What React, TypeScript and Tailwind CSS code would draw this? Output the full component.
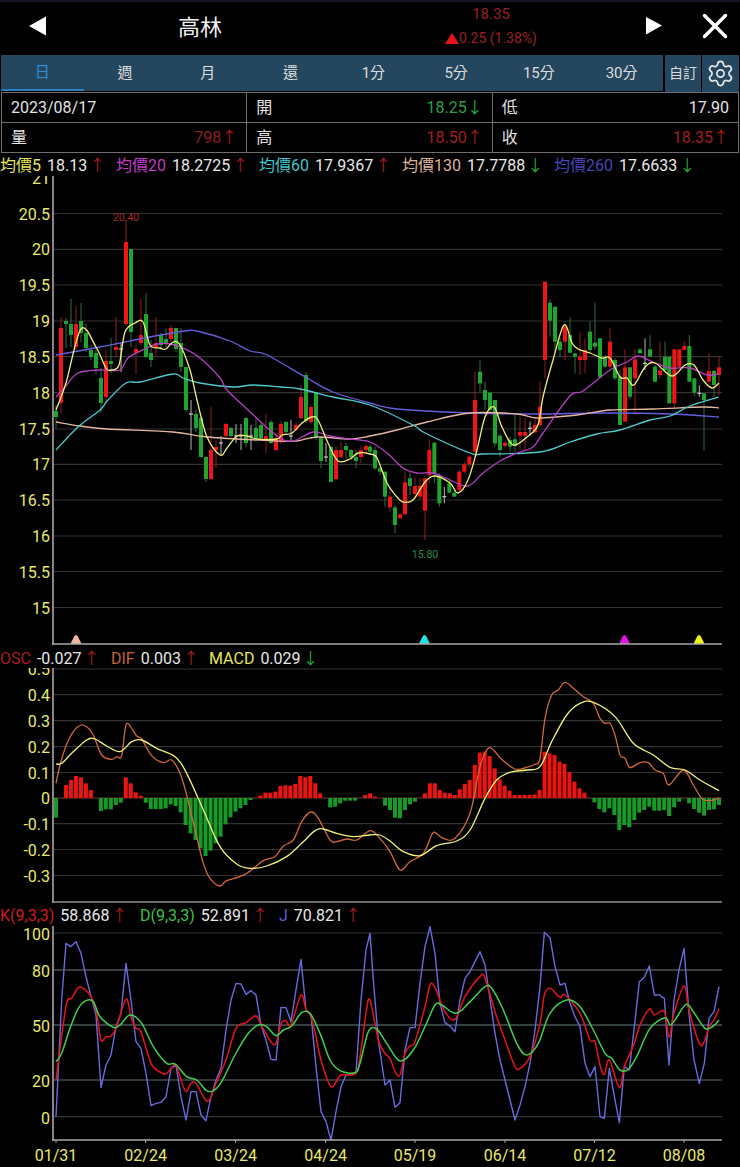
import { Settings, X } from 'lucide-react';

type Pt = [number, number];
type Candle = [number, string, number, number, number, number];

const AXIS_YELLOW = '#e8e96c';
const RED_BODY = '#f01414';
const GREEN_BODY = '#1fa52e';

// x, colour, body top, body bottom, wick top, wick bottom (page px)
const candlesA: Candle[] = [
  [56, 'g', 411, 417, 405, 428], [61, 'r', 328, 403, 317, 413], [66, 'g', 321, 324, 318, 348], [71, 'g', 324, 335, 299, 347],
  [76, 'r', 324, 347, 306, 350], [81, 'g', 321, 333, 303, 342], [86, 'g', 333, 348, 324, 352], [91, 'g', 350, 357, 345, 360],
  [96, 'g', 353, 368, 347, 374], [101, 'g', 378, 403, 368, 413], [106, 'r', 361, 397, 350, 402], [111, 'g', 361, 364, 338, 373],
  [116, 'r', 347, 350, 317, 357], [121, 'w', 349, 349, 343, 372], [126, 'r', 242, 324, 220, 326], [131, 'g', 249, 332, 249, 347],
  [136, 'r', 349, 353, 345, 374], [141, 'r', 335, 343, 299, 345], [146, 'g', 314, 357, 293, 358], [151, 'g', 353, 360, 340, 367],
  [156, 'r', 343, 347, 317, 357], [161, 'g', 335, 345, 333, 350], [166, 'g', 339, 343, 328, 347], [171, 'r', 328, 339, 325, 342],
  [176, 'g', 328, 349, 328, 352], [181, 'g', 343, 367, 328, 372], [186, 'g', 367, 410, 367, 412], [191, 'w', 414, 414, 400, 450],
  [196, 'g', 414, 428, 410, 432], [201, 'g', 418, 457, 416, 458], [206, 'g', 457, 479, 456, 482], [211, 'r', 450, 479, 407, 480],
  [216, 'r', 447, 450, 440, 468], [221, 'w', 443, 443, 436, 455], [226, 'r', 424, 436, 423, 437], [231, 'g', 428, 436, 427, 437],
  [236, 'w', 436, 436, 424, 443], [241, 'w', 436, 436, 424, 450], [246, 'g', 418, 443, 417, 447], [251, 'w', 436, 436, 425, 450],
  [256, 'g', 428, 438, 418, 442], [261, 'g', 425, 438, 422, 440], [266, 'r', 436, 439, 414, 453], [271, 'g', 422, 443, 420, 444],
  [276, 'r', 438, 450, 433, 451], [281, 'r', 424, 442, 421, 444], [286, 'g', 422, 432, 421, 434], [291, 'w', 436, 436, 420, 442],
  [296, 'r', 425, 430, 423, 431], [301, 'r', 397, 418, 385, 419], [306, 'g', 375, 421, 372, 423], [311, 'r', 407, 422, 405, 424],
  [316, 'g', 392, 438, 392, 440], [321, 'g', 438, 461, 436, 468], [326, 'w', 457, 457, 443, 462], [331, 'g', 447, 482, 446, 482],
  [336, 'r', 450, 479, 446, 480], [341, 'r', 450, 457, 442, 458], [346, 'g', 446, 450, 443, 459], [351, 'g', 450, 457, 449, 458],
  [356, 'g', 457, 461, 450, 468], [361, 'r', 450, 457, 446, 463], [366, 'r', 446, 450, 444, 454],
];

// second half read off a 3x crop: zoomed x and y
const candlesB: Candle[] = ([
  [0, 'g', 530, 545, 525, 550], [15, 'g', 540, 595, 530, 600], [30, 'g', 595, 605, 590, 615], [45, 'g', 605, 680, 605, 710],
  [60, 'r', 680, 712, 650, 725], [75, 'g', 712, 765, 705, 790], [90, 'r', 733, 745, 730, 745], [105, 'r', 637, 733, 605, 735],
  [120, 'g', 625, 648, 605, 675], [135, 'r', 648, 672, 620, 680], [150, 'r', 648, 680, 625, 690], [165, 'r', 625, 722, 625, 810],
  [178, 'r', 540, 615, 508, 640], [193, 'g', 518, 612, 518, 640], [208, 'g', 615, 700, 610, 710], [223, 'w', 680, 680, 650, 700],
  [238, 'g', 640, 668, 625, 670], [253, 'g', 668, 680, 660, 680], [268, 'r', 605, 660, 600, 665], [283, 'r', 583, 605, 575, 610],
  [298, 'r', 560, 583, 555, 590], [315, 'r', 390, 545, 305, 550], [330, 'g', 305, 340, 270, 365], [345, 'g', 360, 390, 335, 420],
  [360, 'g', 368, 420, 365, 425], [375, 'g', 390, 520, 390, 530], [390, 'g', 497, 540, 490, 560], [405, 'r', 518, 528, 515, 535],
  [420, 'g', 510, 530, 500, 545], [435, 'g', 508, 528, 435, 545], [450, 'r', 486, 497, 440, 540], [465, 'r', 486, 497, 445, 540],
  [480, 'w', 475, 475, 455, 495], [495, 'r', 465, 487, 440, 490], [510, 'r', 410, 465, 335, 470], [525, 'r', 35, 270, 35, 325],
  [540, 'g', 98, 152, 88, 200], [555, 'g', 110, 215, 110, 245], [570, 'g', 215, 240, 200, 260], [585, 'r', 170, 215, 165, 270],
  [600, 'g', 195, 248, 142, 250], [615, 'g', 250, 260, 250, 310], [630, 'r', 260, 270, 185, 315], [645, 'r', 240, 270, 205, 310],
  [660, 'g', 185, 240, 155, 250], [675, 'g', 218, 230, 98, 240], [690, 'g', 205, 322, 205, 325], [705, 'g', 260, 290, 255, 295],
  [720, 'r', 215, 290, 175, 295], [735, 'g', 270, 325, 265, 330], [750, 'g', 320, 465, 300, 465], [765, 'r', 292, 455, 238, 455],
  [780, 'g', 292, 380, 292, 388], [795, 'r', 268, 325, 238, 430], [810, 'g', 238, 250, 235, 250], [825, 'w', 280, 280, 205, 300],
  [840, 'g', 238, 260, 195, 262], [855, 'g', 290, 335, 285, 338], [870, 'r', 302, 315, 215, 325], [885, 'g', 260, 300, 215, 305],
  [898, 'g', 260, 400, 260, 400], [913, 'r', 238, 400, 238, 415], [928, 'r', 238, 290, 238, 295], [943, 'r', 228, 240, 215, 240],
  [958, 'g', 228, 335, 195, 338], [973, 'g', 325, 368, 325, 378], [988, 'w', 370, 370, 345, 380], [1002, 'g', 370, 390, 370, 540],
  [1017, 'r', 303, 335, 250, 340], [1032, 'g', 303, 345, 300, 380], [1047, 'r', 292, 315, 260, 375],
] as Candle[]).map(([x, c, t, b, wt, wb]) => [370 + x / 3, c, 270 + t / 3, 270 + b / 3, 270 + wt / 3, 270 + wb / 3]);

const ma5: Pt[] = [[56, 410], [66, 383], [81, 329], [96, 347], [106, 368], [111, 370], [119, 365], [125, 332], [135, 323], [143, 322], [150, 345], [160, 348], [166, 349], [173, 342], [180, 345], [190, 370], [197, 400], [207, 437], [220, 455], [227, 448], [237, 436], [247, 436], [257, 439], [277, 439], [282, 435], [292, 433], [302, 423], [312, 417], [318, 420], [328, 443], [338, 461], [350, 459], [358, 453], [370, 454], [377, 458], [387, 483], [397, 497], [403, 502], [413, 500], [425, 482], [435, 476], [450, 483], [458, 493], [468, 480], [477, 450], [485, 417], [494, 407], [502, 427], [513, 445], [527, 437], [538, 425], [543, 397], [553, 360], [564, 325], [572, 343], [578, 349], [590, 353], [602, 358], [610, 358], [620, 377], [627, 378], [634, 385], [645, 367], [655, 363], [672, 376], [685, 365], [694, 365], [703, 380], [712, 388], [719, 383]];
const ma20: Pt[] = [[56, 397], [65, 387], [78, 373], [100, 370], [120, 370], [128, 358], [147, 348], [157, 344], [170, 344], [183, 348], [200, 358], [220, 378], [227, 390], [248, 410], [277, 436], [293, 441], [313, 432], [330, 436], [350, 439], [370, 442], [387, 453], [403, 468], [417, 473], [433, 473], [450, 480], [468, 486], [483, 473], [500, 461], [517, 453], [533, 447], [543, 433], [570, 396], [583, 391], [610, 370], [627, 362], [638, 356], [653, 362], [670, 368], [690, 368], [707, 375], [719, 374]];
const ma60: Pt[] = [[56, 450], [78, 427], [100, 410], [108, 400], [126, 383], [140, 382], [173, 374], [183, 378], [200, 383], [233, 387], [253, 385], [280, 387], [300, 389], [333, 397], [370, 405], [413, 425], [425, 433], [470, 453], [483, 454], [540, 452], [570, 442], [597, 434], [620, 430], [650, 420], [670, 416], [690, 406], [719, 397]];
const ma130: Pt[] = [[56, 422], [80, 426], [107, 429], [173, 432], [207, 437], [277, 441], [297, 441], [317, 437], [350, 439], [370, 436], [397, 430], [427, 422], [470, 413], [517, 414], [537, 418], [577, 415], [610, 410], [653, 409], [703, 407], [719, 408]];
const ma260: Pt[] = [[56, 355], [100, 347], [150, 337], [185, 331], [197, 331], [230, 341], [250, 351], [267, 355], [307, 378], [333, 392], [370, 403], [397, 409], [470, 413], [537, 414], [603, 413], [670, 414], [719, 417]];

// MACD bars: bar end y in the 3x crops, i counts from the first bar
const barEnds = [533, 473, 435, 420, 408, 412, 430, 450, 473, 513, 508, 508, 495, 488, 412, 430, 457, 467, 488, 507, 507, 507, 505, 493, 498, 517, 555, 580, 600, 625, 648, 632, 610, 590, 553, 532, 515, 505, 495, 480, 473, 466, 458, 458, 455, 438, 436, 437, 432, 408, 412, 408, 430, 460, 473, 502, 500, 490, 482, 482, 482, 473, 465, 460, 470, 473, 497, 510, 533, 535, 510, 493, 485, 473, 460, 430, 430, 450, 458, 460, 465, 448, 432, 420, 375, 338, 335, 348, 385, 418, 437, 452, 465, 465, 465, 465, 463, 450, 335, 340, 345, 365, 372, 397, 425, 445, 458, 473, 487, 507, 517, 505, 525, 570, 555, 562, 540, 518, 510, 500, 512, 512, 510, 528, 502, 485, 473, 490, 507, 518, 527, 510, 508, 495];

const left = (pts: Pt[], oy: number): Pt[] => pts.map(([x, y]) => [x / 3, oy + y / 3]);
const right = (pts: Pt[], oy: number): Pt[] => pts.map(([x, y]) => [370 + x / 3, oy + y / 3]);

const dif: Pt[] = [
  ...left([[168, 430], [180, 375], [198, 318], [220, 275], [243, 255], [262, 262], [280, 285], [305, 345], [335, 358], [350, 350], [365, 347], [378, 255], [395, 265], [410, 288], [425, 297], [455, 347], [490, 368], [515, 360], [540, 400], [560, 465], [590, 590], [610, 670], [630, 715], [660, 738], [680, 722], [735, 703], [790, 662], [825, 650], [850, 618], [880, 600], [905, 545], [932, 516], [955, 535], [990, 600], [1010, 605], [1040, 597], [1070, 600]], 640),
  ...right([[0, 572], [25, 590], [60, 635], [90, 690], [120, 665], [160, 640], [185, 585], [195, 577], [220, 595], [255, 595], [300, 520], [330, 380], [358, 323], [395, 358], [435, 387], [470, 382], [495, 373], [510, 355], [525, 235], [545, 165], [565, 150], [585, 127], [610, 145], [640, 170], [670, 190], [690, 235], [705, 250], [720, 250], [735, 285], [750, 345], [765, 355], [780, 383], [810, 368], [835, 368], [855, 390], [880, 400], [897, 435], [940, 390], [970, 435], [998, 478], [1030, 480], [1047, 473]], 640),
];
const macd: Pt[] = [
  ...left([[168, 372], [185, 370], [215, 340], [260, 300], [285, 297], [320, 318], [360, 335], [395, 305], [425, 300], [470, 325], [525, 350], [560, 400], [610, 510], [660, 620], [710, 672], [750, 685], [800, 678], [860, 650], [905, 610], [945, 572], [970, 567], [1010, 580], [1060, 590]], 640),
  ...right([[0, 585], [30, 585], [60, 603], [100, 635], [150, 647], [200, 617], [260, 603], [300, 570], [345, 475], [380, 420], [420, 397], [470, 390], [510, 380], [545, 305], [590, 225], [630, 190], [670, 187], [735, 230], [790, 310], [850, 345], [900, 382], [945, 390], [990, 420], [1047, 452]], 640),
];

const kdjJ: Pt[] = [
  ...left([[168, 650], [185, 300], [198, 130], [212, 140], [228, 125], [243, 160], [258, 230], [273, 290], [288, 345], [303, 562], [318, 495], [333, 465], [348, 380], [363, 340], [378, 190], [393, 300], [408, 425], [423, 445], [438, 520], [453, 617], [468, 610], [483, 607], [498, 590], [513, 505], [528, 495], [543, 590], [558, 660], [573, 575], [588, 575], [603, 645], [618, 662], [633, 590], [648, 540], [663, 505], [678, 390], [693, 300], [708, 250], [723, 252], [738, 283], [753, 272], [768, 285], [783, 375], [798, 420], [813, 478], [828, 480], [843, 322], [858, 323], [873, 365], [888, 270], [903, 178], [918, 330], [933, 345], [948, 500], [963, 635], [978, 665], [993, 720], [1008, 635], [1023, 560], [1038, 525], [1053, 522], [1068, 520], [1083, 300], [1098, 150], [1110, 100]], 900),
  ...right([[10, 240], [25, 420], [45, 555], [60, 540], [75, 622], [90, 608], [105, 450], [120, 383], [135, 383], [150, 250], [165, 140], [180, 80], [195, 160], [210, 310], [225, 368], [240, 378], [255, 395], [270, 300], [285, 235], [300, 215], [330, 155], [345, 195], [375, 400], [390, 480], [405, 540], [435, 660], [450, 615], [465, 560], [480, 490], [495, 390], [510, 260], [523, 97], [540, 113], [555, 200], [570, 255], [585, 250], [600, 310], [615, 350], [630, 380], [645, 490], [660, 530], [675, 500], [690, 650], [703, 655], [718, 505], [733, 590], [748, 668], [763, 500], [778, 510], [793, 380], [808, 245], [823, 232], [838, 198], [853, 285], [868, 285], [883, 295], [897, 495], [912, 300], [927, 210], [942, 145], [957, 340], [972, 480], [988, 550], [1003, 490], [1017, 355], [1032, 335], [1047, 260]], 900),
];
const kdjK: Pt[] = [
  ...left([[168, 540], [198, 320], [215, 295], [235, 263], [250, 265], [273, 290], [290, 340], [303, 420], [318, 410], [333, 408], [350, 380], [378, 297], [393, 350], [408, 385], [423, 395], [453, 490], [483, 518], [498, 522], [513, 505], [528, 495], [543, 540], [558, 575], [573, 550], [588, 550], [618, 602], [633, 590], [648, 550], [678, 480], [708, 385], [738, 368], [768, 347], [783, 375], [813, 425], [828, 430], [843, 370], [858, 363], [873, 375], [903, 285], [918, 330], [933, 350], [948, 410], [963, 480], [993, 560], [1023, 525], [1068, 520], [1083, 450], [1098, 340], [1110, 300]], 900),
  ...right([[25, 420], [45, 460], [60, 475], [75, 515], [90, 525], [105, 460], [120, 438], [135, 425], [165, 320], [180, 255], [195, 262], [225, 335], [255, 358], [285, 290], [330, 230], [345, 235], [375, 335], [405, 420], [435, 500], [450, 505], [480, 470], [510, 370], [523, 285], [540, 265], [570, 292], [585, 285], [630, 340], [660, 420], [675, 425], [690, 495], [703, 523], [718, 480], [748, 563], [763, 500], [793, 430], [808, 380], [838, 327], [853, 345], [883, 335], [897, 412], [912, 340], [942, 258], [957, 330], [988, 430], [1003, 425], [1017, 380], [1032, 360], [1047, 327]], 900),
];
const kdjD: Pt[] = [
  ...left([[168, 485], [185, 460], [210, 385], [235, 325], [258, 302], [280, 305], [300, 350], [340, 382], [360, 375], [390, 345], [425, 370], [460, 440], [500, 490], [525, 492], [560, 530], [590, 540], [620, 572], [640, 572], [665, 545], [705, 465], [745, 400], [775, 375], [800, 380], [828, 407], [850, 390], [875, 378], [905, 338], [930, 340], [960, 400], [990, 480], [1020, 512], [1065, 518], [1080, 490], [1105, 395]], 900),
  ...right([[20, 387], [50, 430], [90, 483], [130, 450], [165, 380], [195, 315], [215, 315], [258, 340], [300, 305], [345, 260], [365, 265], [400, 330], [440, 430], [470, 465], [505, 430], [540, 340], [590, 300], [630, 320], [670, 390], [705, 460], [725, 475], [750, 510], [775, 508], [800, 470], [840, 385], [885, 353], [900, 375], [915, 360], [948, 313], [970, 335], [1005, 385], [1030, 378], [1047, 360]], 900),
];

function smooth(pts: Pt[]) {
  let d = `M${pts[0][0]} ${pts[0][1]}`;
  for (let i = 0; i < pts.length - 1; i++) {
    const p0 = pts[i - 1] || pts[i];
    const p1 = pts[i];
    const p2 = pts[i + 1];
    const p3 = pts[i + 2] || p2;
    const c1x = p1[0] + (p2[0] - p0[0]) / 6;
    const c1y = p1[1] + (p2[1] - p0[1]) / 6;
    const c2x = p2[0] - (p3[0] - p1[0]) / 6;
    const c2y = p2[1] - (p3[1] - p1[1]) / 6;
    d += `C${c1x} ${c1y} ${c2x} ${c2y} ${p2[0]} ${p2[1]}`;
  }
  return d;
}

function Curve({ pts, color, width = 1.3 }: { pts: Pt[]; color: string; width?: number }) {
  return <path d={smooth(pts)} fill="none" stroke={color} strokeWidth={width} />;
}

function AxisLabel({ y, children }: { y: number; children: string }) {
  return (
    <text x={50} y={y + 6} textAnchor="end" fontSize={16} fill={AXIS_YELLOW}>
      {children}
    </text>
  );
}

function GridLine({ y, color = '#333333' }: { y: number; color?: string }) {
  return <line x1={53} x2={722} y1={y} y2={y} stroke={color} strokeWidth={1.2} />;
}

function Marker({ x, color }: { x: number; color: string }) {
  return <path d={`M${x - 4} 643L${x - 1} 637Q${x} 635 ${x + 1} 637L${x + 4} 643Z`} fill={color} stroke={color} strokeWidth={2} strokeLinejoin="round" />;
}

const priceTicks: [number, string][] = [[178, '21'], [213.5, '20.5'], [249.3, '20'], [285, '19.5'], [321, '19'], [356.7, '18.5'], [392.7, '18'], [429, '17.5'], [464.3, '17'], [500, '16.5'], [536, '16'], [571.5, '15.5'], [607.5, '15']];
const macdTicks: [number, string][] = [[669, '0.5'], [694.7, '0.4'], [720.7, '0.3'], [746.7, '0.2'], [772.5, '0.1'], [798, '0'], [823.7, '-0.1'], [849.5, '-0.2'], [875.5, '-0.3']];
const dates: [number, string][] = [[56, '01/31'], [145.6, '02/24'], [235.6, '03/24'], [325.6, '04/24'], [415, '05/19'], [505, '06/14'], [594.5, '07/12'], [684, '08/08']];

function PriceChart() {
  return (
    <svg viewBox="0 176 740 472" className="block w-[740px] h-[472px]">
      {priceTicks.slice(1).map(([y]) => <GridLine key={y} y={y} />)}
      {[...candlesA, ...candlesB].map(([x, c, t, b, wt, wb]) => {
        const wick = c === 'r' ? '#8f1f1f' : c === 'g' ? '#2f6f3c' : '#b5b5b5';
        const body = c === 'r' ? RED_BODY : c === 'g' ? GREEN_BODY : '#c8c8c8';
        return (
          <g key={x}>
            <line x1={x} x2={x} y1={wt} y2={wb} stroke={wick} strokeWidth={1} />
            {c === 'w' ? (
              <line x1={x - 2} x2={x + 2} y1={t} y2={t} stroke={body} strokeWidth={1.2} />
            ) : (
              <rect x={x - 2} y={t} width={4} height={Math.max(b - t, 1)} fill={body} />
            )}
          </g>
        );
      })}
      <Curve pts={ma260} color="#6460dc" />
      <Curve pts={ma130} color="#e4b7a0" />
      <Curve pts={ma60} color="#52c9cf" />
      <Curve pts={ma20} color="#b53fc2" />
      <Curve pts={ma5} color="#f1f17a" />
      <text x={126} y={221} textAnchor="middle" fontSize={10.5} fill="#a82a2a">20.40</text>
      <text x={425} y={558} textAnchor="middle" fontSize={10.5} fill="#2f8f45">15.80</text>
      {priceTicks.map(([y, label]) => <AxisLabel key={label} y={y}>{label}</AxisLabel>)}
      <Marker x={76} color="#f0b49c" />
      <Marker x={424.5} color="#22e0e8" />
      <Marker x={624.5} color="#e014e0" />
      <Marker x={699} color="#f0f014" />
      <line x1={53} x2={53} y1={176} y2={645} stroke="#a8a8a8" strokeWidth={1.6} />
      <line x1={52} x2={722} y1={644} y2={644} stroke="#a8a8a8" strokeWidth={1.6} />
    </svg>
  );
}

function MacdChart() {
  return (
    <svg viewBox="0 668 740 237" className="block w-[740px] h-[237px]">
      {macdTicks.map(([y, label]) => label !== '0' && <GridLine key={y} y={y} />)}
      <line x1={53} x2={722} y1={798} y2={798} stroke="#6b3a3a" strokeWidth={1} />
      {barEnds.map((end, i) => {
        const x = 56 + 4.985 * i;
        const y = 640 + end / 3;
        if (end === 473) return null;
        return end < 473 ? (
          <rect key={i} x={x - 2} y={y} width={4} height={798 - y} fill="#ec1410" />
        ) : (
          <rect key={i} x={x - 2} y={798} width={4} height={y - 798} fill="#179a28" />
        );
      })}
      <Curve pts={dif} color="#d2693c" />
      <Curve pts={macd} color="#f1f17a" />
      {macdTicks.map(([y, label]) => <AxisLabel key={label} y={y}>{label}</AxisLabel>)}
      <line x1={53} x2={53} y1={668} y2={903} stroke="#a8a8a8" strokeWidth={1.6} />
      <line x1={52} x2={722} y1={902} y2={902} stroke="#909090" strokeWidth={1.6} />
    </svg>
  );
}

function KdjChart() {
  return (
    <svg viewBox="0 926 740 241" className="block w-[740px] h-[241px]">
      <GridLine y={933} />
      <GridLine y={970} color="#777777" />
      <GridLine y={1025} color="#6a8080" />
      <GridLine y={1080} color="#5f6f6f" />
      <GridLine y={1116.6} />
      <path d={`M${kdjJ.map((p) => p.join(' ')).join('L')}`} fill="none" stroke="#6a6ae0" strokeWidth={1.4} strokeLinejoin="round" />
      <Curve pts={kdjK} color="#e5141c" width={1.5} />
      <Curve pts={kdjD} color="#42cf4e" width={1.5} />
      <AxisLabel y={934}>100</AxisLabel>
      <AxisLabel y={971}>80</AxisLabel>
      <AxisLabel y={1026}>50</AxisLabel>
      <AxisLabel y={1081}>20</AxisLabel>
      <AxisLabel y={1118}>0</AxisLabel>
      <line x1={53} x2={53} y1={926} y2={1141} stroke="#a8a8a8" strokeWidth={1.6} />
      <line x1={52} x2={722} y1={1140} y2={1140} stroke="#a8a8a8" strokeWidth={1.6} />
      {dates.map(([x, label]) => (
        <g key={label}>
          <line x1={x} x2={x} y1={1140} y2={1143} stroke="#a8a8a8" strokeWidth={1} />
          <text x={x} y={1161} textAnchor="middle" fontSize={16} fill={AXIS_YELLOW}>{label}</text>
        </g>
      ))}
    </svg>
  );
}

function Arrow({ up }: { up: boolean }) {
  return <span className={up ? 'text-[#a11e1e]' : 'text-[#26a83a]'}>{up ? '↑' : '↓'}</span>;
}

function InfoCell({ label, value, color, up, className }: { label: string; value?: string; color?: string; up?: boolean; className: string }) {
  return (
    <div className={`flex items-center justify-between px-[9px] pt-[2px] text-[16px] text-[#e4e4e4] border-[#6e6e6e] ${className}`}>
      <span>{label}</span>
      <span className={color}>
        {value}
        {up !== undefined && <Arrow up={up} />}
      </span>
    </div>
  );
}

function LegendItem({ label, value, color, up, className }: { label: string; value: string; color: string; up: boolean; className: string }) {
  return (
    <div className={`flex items-center ${className}`}>
      <span className={color}>{label}</span>
      <span className="ml-[6px] text-[#e8e8e8]">{value}</span>
      <span className="ml-[2px]"><Arrow up={up} /></span>
    </div>
  );
}

export default function App() {
  const tabs = ['日', '週', '月', '還', '1分', '5分', '15分', '30分'];

  return (
    <div className="w-[740px] h-[1167px] overflow-hidden bg-black font-['Roboto','Noto_Sans_CJK_TC',sans-serif]">
      <div className="h-[55px] border-t-2 border-[#14142a]">
        <div className="flex items-center h-[53px]">
          <svg viewBox="0 0 20 22" className="ml-[28px] w-[20px] h-[22px] -mt-[5px]">
            <path d="M1 11L18 1.500V20.500Z" fill="#ffffff" />
          </svg>
          <div className="w-[304px] text-center text-[22px] text-[#f0f0f0] -mt-[2px]">高林</div>
          <div className="flex flex-col items-center w-[186px] ml-[46px] -mt-[5px] text-[14px] text-[#9a2222] leading-[20px]">
            <span className="text-[15px]">18.35</span>
            <span className="flex items-center mt-[4px]">
              <svg viewBox="0 0 14 11" className="w-[14px] h-[11px]">
                <path d="M7 0L14 11H0Z" fill="#e8141c" />
              </svg>
              0.25 (1.38%)
            </span>
          </div>
          <svg viewBox="0 0 18 20" className="ml-[61px] w-[18px] h-[20px] -mt-[6px]">
            <path d="M1 1L17 9.500L1 18.500Z" fill="#ffffff" />
          </svg>
          <X size={42} strokeWidth={2} className="ml-[31px] -mt-[6px] text-white" />
        </div>
      </div>

      <div className="flex h-[37px] pl-[1px]">
        <div className="flex w-[662px] bg-[#24475f] h-[36px]">
          {tabs.map((t, i) => (
            <div
              key={t}
              className={
                i === 0
                  ? 'flex-1 flex items-center justify-center text-[15px] text-[#2f8fd8] border-b-2 border-[#2a7cc0]'
                  : 'flex-1 flex items-center justify-center text-[15px] text-[#dcdcdc]'
              }
            >
              {t}
            </div>
          ))}
        </div>
        <div className="ml-[2px] w-[36px] bg-[#24475f] flex items-center justify-center text-[14px] text-[#dcdcdc]">自訂</div>
        <div className="ml-[1px] w-[37px] bg-[#24475f] flex items-center justify-center">
          <Settings size={29} strokeWidth={1.4} className="text-[#e8e8e8]" />
        </div>
      </div>

      <div className="grid grid-cols-3 grid-rows-2 h-[61px] ml-[1px] w-[738px] border border-[#6e6e6e]">
        <InfoCell label="2023/08/17" className="border-r border-b" />
        <InfoCell label="開" value="18.25" color="text-[#2f9f48]" up={false} className="border-r border-b" />
        <InfoCell label="低" value="17.90" color="text-[#e4e4e4]" className="border-b" />
        <InfoCell label="量" value="798" color="text-[#8f2020]" up={true} className="border-r" />
        <InfoCell label="高" value="18.50" color="text-[#a11e1e]" up={true} className="border-r" />
        <InfoCell label="收" value="18.35" color="text-[#a11e1e]" up={true} className="" />
      </div>

      <div className="flex items-center h-[23px] pt-[2px] text-[16px] whitespace-nowrap">
        <LegendItem label="均價5" value="18.13" color="text-[#e5e55c]" up={true} className="w-[116px]" />
        <LegendItem label="均價20" value="18.2725" color="text-[#c03cc4]" up={true} className="w-[143px]" />
        <LegendItem label="均價60" value="17.9367" color="text-[#45c4c8]" up={true} className="w-[143px]" />
        <LegendItem label="均價130" value="17.7788" color="text-[#dfb39a]" up={false} className="w-[152px]" />
        <LegendItem label="均價260" value="17.6633" color="text-[#4a45b8]" up={false} className="w-[150px]" />
      </div>

      <PriceChart />

      <div className="flex items-center h-[20px] pt-[1px] text-[16px] whitespace-nowrap">
        <LegendItem label="OSC" value="-0.027" color="text-[#a81e1e]" up={true} className="w-[111px]" />
        <LegendItem label="DIF" value="0.003" color="text-[#c8643a]" up={true} className="w-[98px]" />
        <LegendItem label="MACD" value="0.029" color="text-[#e5e55c]" up={false} className="w-[110px]" />
      </div>

      <MacdChart />

      <div className="flex items-center h-[21px] text-[16px] whitespace-nowrap">
        <LegendItem label="K(9,3,3)" value="58.868" color="text-[#d01c1c]" up={true} className="w-[140px]" />
        <LegendItem label="D(9,3,3)" value="52.891" color="text-[#3fc04a]" up={true} className="w-[139px]" />
        <LegendItem label="J" value="70.821" color="text-[#5a5ad0]" up={true} className="w-[90px]" />
      </div>

      <KdjChart />
    </div>
  );
}
